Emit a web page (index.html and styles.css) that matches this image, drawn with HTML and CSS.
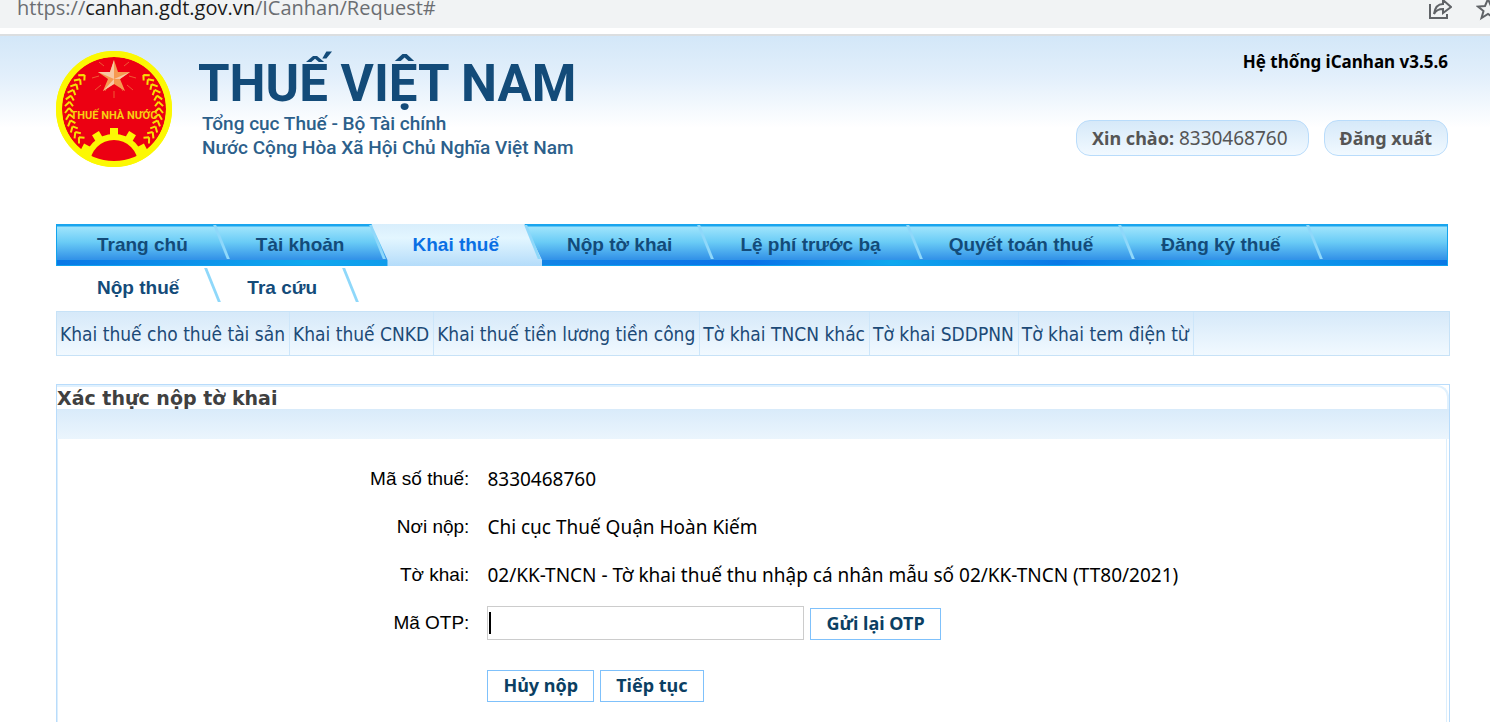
FILE: index.html
```html
<!DOCTYPE html>
<html lang="vi">
<head>
<meta charset="UTF-8">
<meta name="viewport" content="width=device-width, initial-scale=1.0">
<title>Thuế Việt Nam</title>
<link rel="stylesheet" href="styles.css">
</head>
<body>
    <div class="address-bar">
        <span class="url">https://<b>canhan.gdt.gov.vn</b>/ICanhan/Request#</span>
        <div class="address-icons">
            <svg class="icon" width="24" height="24" viewBox="0 0 24 24">
                <path d="M2 7V21H19V17M6 17C7 10 10 7 15 7V3L23 10L15 16V12C11 12 8 13 6 17Z"/>
            </svg>
            <svg class="icon" width="24" height="24" viewBox="0 0 24 24">
                <path d="M12 2L15 9L22 9.500L16.500 14L18.500 21L12 17L5.500 21L7.500 14L2 9.500L9 9Z"/>
            </svg>
        </div>
    </div>
    <div class="page">
        <header class="header">
            <div class="brand">
                <svg class="emblem" width="116" height="116" viewBox="0 0 116 116">
                    <defs>
                        <path id="leaf" d="M59 13l-5-4M59 13l-4 4"/>
                        <g id="wreath">
                            <use href="#leaf" transform="rotate(-42 58 58)"/>
                            <use href="#leaf" transform="rotate(-50 58 58)"/>
                            <use href="#leaf" transform="rotate(-58 58 58)"/>
                            <use href="#leaf" transform="rotate(-66 58 58)"/>
                            <use href="#leaf" transform="rotate(-74 58 58)"/>
                            <use href="#leaf" transform="rotate(-82 58 58)"/>
                            <use href="#leaf" transform="rotate(-90 58 58)"/>
                            <use href="#leaf" transform="rotate(-98 58 58)"/>
                            <use href="#leaf" transform="rotate(-106 58 58)"/>
                            <use href="#leaf" transform="rotate(-114 58 58)"/>
                            <use href="#leaf" transform="rotate(-122 58 58)"/>
                            <use href="#leaf" transform="rotate(-130 58 58)"/>
                        </g>
                        <clipPath id="disc"><circle cx="58" cy="58" r="53"/></clipPath>
                    </defs>
                    <circle cx="58" cy="58" r="58" fill="#fcf803"/>
                    <circle cx="58" cy="58" r="52" fill="#ec0012"/>
                    <g stroke="#ee5a34" stroke-width="1">
                        <path d="M43 11l5 4M73 11l-5 4M36 27l7-2M80 27l-7-2M39 39l6-5M77 39l-6-5M49 40l3-5M67 40l-3-5M58 40v7"/>
                    </g>
                    <path d="M58 9l4 12h12l-10 7 5 12-11-7-11 7 5-12-10-7h12z" fill="#f59a50"/>
                    <path d="M58 9v19l-16-7h12zM58 28v5l-11 7zM58 28l16-7-10 7z" fill="#f7c8a4"/>
                    <g fill="none" stroke="#f6e004" stroke-width="2">
                        <use href="#wreath"/>
                        <use href="#wreath" transform="translate(116 0) scale(-1 1)"/>
                    </g>
                    <text class="emblem-text" x="58" y="68" text-anchor="middle">THUẾ NHÀ NƯỚC</text>
                    <g clip-path="url(#disc)">
                        <g fill="#fcf803">
                            <circle cx="58" cy="113" r="30"/>
                            <rect x="54" y="77" width="8" height="9"/>
                            <rect x="54" y="77" width="8" height="9" transform="rotate(31 58 113)"/>
                            <rect x="54" y="77" width="8" height="9" transform="rotate(-31 58 113)"/>
                            <rect x="54" y="77" width="8" height="9" transform="rotate(62 58 113)"/>
                            <rect x="54" y="77" width="8" height="9" transform="rotate(-62 58 113)"/>
                        </g>
                        <circle cx="58" cy="113" r="24" fill="#ec0012"/>
                    </g>
                    <circle cx="58" cy="58" r="55" fill="none" stroke="#fcf803" stroke-width="6"/>
                </svg>
                <div class="brand-text">
                    <h1>THUẾ VIỆT NAM</h1>
                    <p>Tổng cục Thuế - Bộ Tài chính</p>
                    <p>Nước Cộng Hòa Xã Hội Chủ Nghĩa Việt Nam</p>
                </div>
            </div>
            <div class="account">
                <div class="version">Hệ thống iCanhan v3.5.6</div>
                <div class="pills">
                    <div class="pill user"><b>Xin chào:</b> 8330468760</div>
                    <a class="pill" href="#"><b>Đăng xuất</b></a>
                </div>
            </div>
        </header>
        <nav>
            <ul class="menu">
                <li><a href="#">Trang chủ</a></li>
                <li><a href="#">Tài khoản</a></li>
                <li class="active"><a href="#">Khai thuế</a></li>
                <li><a href="#">Nộp tờ khai</a></li>
                <li><a href="#">Lệ phí trước bạ</a></li>
                <li><a href="#">Quyết toán thuế</a></li>
                <li><a href="#">Đăng ký thuế</a></li>
                <li><a href="#">Nộp thuế</a></li>
                <li><a href="#">Tra cứu</a></li>
            </ul>
            <ul class="submenu">
                <li><a href="#">Khai thuế cho thuê tài sản</a></li>
                <li><a href="#">Khai thuế CNKD</a></li>
                <li><a href="#">Khai thuế tiền lương tiền công</a></li>
                <li><a href="#">Tờ khai TNCN khác</a></li>
                <li><a href="#">Tờ khai SDDPNN</a></li>
                <li><a href="#">Tờ khai tem điện từ</a></li>
            </ul>
        </nav>
        <main class="panel">
            <h2>Xác thực nộp tờ khai</h2>
            <div class="band"></div>
            <form class="panel-body">
                <table>
                    <tr>
                        <th>Mã số thuế:</th>
                        <td>8330468760</td>
                    </tr>
                    <tr>
                        <th>Nơi nộp:</th>
                        <td>Chi cục Thuế Quận Hoàn Kiếm</td>
                    </tr>
                    <tr>
                        <th>Tờ khai:</th>
                        <td>02/KK-TNCN - Tờ khai thuế thu nhập cá nhân mẫu số 02/KK-TNCN (TT80/2021)</td>
                    </tr>
                    <tr>
                        <th><label for="otp">Mã OTP:</label></th>
                        <td><div class="row"><input type="text" id="otp"><button type="button">Gửi lại OTP</button></div></td>
                    </tr>
                    <tr class="actions">
                        <th></th>
                        <td><div class="row"><button type="button">Hủy nộp</button><button type="submit">Tiếp tục</button></div></td>
                    </tr>
                </table>
            </form>
        </main>
    </div>
</body>
</html>
```
FILE: styles.css
```css
body {
    margin: 0;
    font-family: "Noto Sans", Tahoma, sans-serif;
    font-size: 19px;
    color: #000;
    background: #fff;
}
a {
    color: inherit;
    text-decoration: none;
}
ul {
    list-style: none;
    margin: 0;
    padding: 0;
}
.address-bar {
    display: flex;
    justify-content: space-between;
    align-items: flex-end;
    height: 28px;
    padding-left: 17px;
    background: #f1f3f4;
    border-bottom: 6px solid #fff;
    overflow: hidden;
}
.url {
    font-family: "Open Sans", "Segoe UI", sans-serif;
    font-size: 20px;
    line-height: 40px;
    color: #6b6e72;
}
.url b {
    font-weight: normal;
    color: #1b1b1b;
}
.address-icons {
    display: flex;
    gap: 24px;
    margin-right: -10px;
    padding-bottom: 7px;
}
.icon {
    fill: none;
    stroke: #606367;
    stroke-width: 2;
}
.page {
    padding: 0 40px 0 56px;
    border-top: 2px solid #dbdee0;
    background: linear-gradient(#d3e7f8, #e2effb 40px, #fff 92px);
}
.header {
    display: flex;
    justify-content: space-between;
    height: 188px;
    padding-right: 2px;
}
.brand {
    display: flex;
    gap: 26px;
    padding-top: 15px;
    align-items: flex-start;
}
.emblem-text {
    font-family: Roboto, sans-serif;
    font-size: 11px;
    font-weight: bold;
    fill: #f8cf10;
}
.brand-text {
    font-family: Roboto, sans-serif;
    color: #134b79;
}
h1 {
    margin: 5px 0 0;
    font-size: 51px;
    line-height: 56px;
}
.brand-text p {
    margin: 0 0 0 4px;
    font-size: 19px;
    font-weight: 500;
    line-height: 24px;
    color: #2c608b;
}
.account {
    display: flex;
    flex-direction: column;
    align-items: flex-end;
}
.version {
    margin-top: 14px;
    font-size: 17px;
    font-weight: bold;
    line-height: 24px;
}
.pills {
    display: flex;
    gap: 15px;
    height: 36px;
    margin-top: 46px;
}
.pill {
    padding: 0 15px;
    border: 1px solid #b9dcfb;
    border-radius: 14px;
    background: linear-gradient(#d6e9f9, #f1f9ff);
    color: #555;
    line-height: 34px;
}
.pill b {
    font-size: 18px;
}
.user {
    padding-right: 20px;
}
.menu {
    display: flex;
    flex-wrap: wrap;
    margin-right: 2px;
    background: linear-gradient(#12a3ee, #12a3ee) 0 0 / 1px 42px no-repeat,
        linear-gradient(#12a3ee, #12a3ee) 100% 0 / 1px 42px no-repeat,
        linear-gradient(90deg, #0a78e6, #0fa8ee 18%, #1284e6 35%, #0a72e8 50%, #0fa8ee 60%, #0a78e6 72%, #0fa8ee 84%, #0a78e6) 0 36px / 100% 5px no-repeat,
        linear-gradient(#19a5ee 2px, #9fe4fc 3px, #6accf6 18px, #3493e8 35px, #0fa0ee 41px) 0 0 / 100% 42px no-repeat;
}
.menu li {
    position: relative;
    height: 43px;
    padding: 0 27px 0 41px;
    font-family: "Liberation Sans", Arial, sans-serif;
    font-size: 19px;
    font-weight: bold;
    line-height: 42px;
    color: #134b79;
}
.menu li a {
    position: relative;
    z-index: 1;
}
/* slanted divider */
.menu li::after {
    content: "";
    position: absolute;
    top: 1px;
    right: -8px;
    width: 3px;
    height: 34px;
    background: #8fd8fa;
    transform: skewX(22deg);
}
.menu .active {
    color: #0a6fe4;
}
.menu .active::before {
    content: "";
    position: absolute;
    top: 0;
    left: 0;
    right: -16px;
    height: 42px;
    background: linear-gradient(#d8eefc, #e3f6ff 14px, #b4dcfa);
    clip-path: polygon(0 0, 153px 0, 100% 36px, 100% 100%, 16px 100%, 16px 36px);
}
.submenu {
    display: flex;
    margin-top: 1px;
    height: 43px;
    border: 1px solid #c7e2f7;
    background: linear-gradient(#d6e9f9, #f1f9ff);
    color: #1c4a77;
    font-family: "DejaVu Sans Condensed", Tahoma, sans-serif;
    line-height: 44px;
}
.submenu li {
    padding: 0 4px 0 3px;
    border-right: 1px solid #cde6fa;
}
.panel {
    margin-top: 28px;
    border: 1px solid #b9dcfb;
    border-bottom: 0;
}
h2 {
    margin: 0;
    height: 22px;
    font-family: "DejaVu Sans", Verdana, sans-serif;
    font-size: 19px;
    line-height: 22px;
    color: #404040;
    border: 2px solid #e0f1fe;
    border-width: 2px 2px 0 0;
    border-radius: 0 12px 0 0;
}
.band {
    height: 30px;
    background: linear-gradient(#d9ebfa, #ebf5fd);
}
.panel-body {
    margin-right: 2px;
    padding: 16px 0 20px;
    border: 1px solid #dbeefd;
    border-width: 0 1px;
    min-height: 260px;
}
table {
    width: 100%;
    border-collapse: collapse;
}
tr {
    height: 48px;
}
th {
    width: 30%;
    padding: 0 5px 0 0;
    font-family: "Liberation Sans", Arial, sans-serif;
    font-weight: normal;
    text-align: right;
}
td {
    padding: 0 0 0 13px;
}
.row {
    display: flex;
    align-items: flex-end;
    gap: 6px;
}
.row input {
    box-sizing: border-box;
    width: 317px;
    height: 34px;
    border: 1px solid #ccc;
    font-size: 19px;
    background: linear-gradient(#000, #000) 1px 5px / 2px 22px no-repeat;
}
button {
    height: 32px;
    padding: 0 15px 2px;
    border: 1px solid #7fc1fb;
    background: #fff;
    color: #0b3f63;
    font-family: "Noto Sans", Tahoma, sans-serif;
    font-size: 18px;
    font-weight: bold;
}
.actions {
    height: 78px;
}
```
